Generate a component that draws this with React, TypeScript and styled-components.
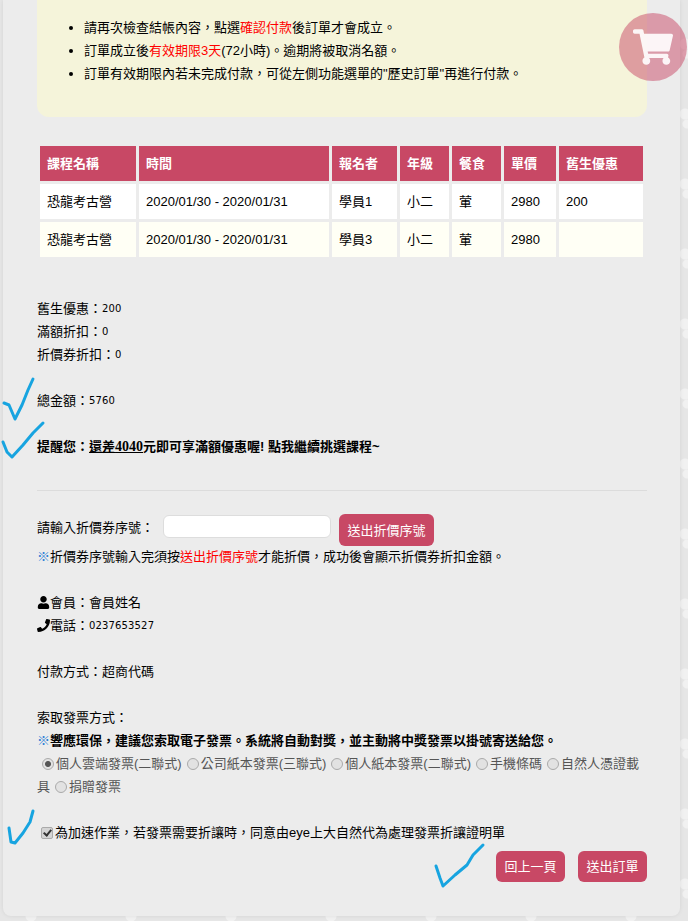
import React from 'react';
import styled, { createGlobalStyle } from 'styled-components';
import { FaShoppingCart, FaUser, FaPhone } from 'react-icons/fa';

const GlobalStyle = createGlobalStyle`
  html, body {
    margin: 0;
    padding: 0;
    height: 921px;
    overflow: hidden;
  }
  body {
    background-color: #e6e6e6;
    background-image:
      radial-gradient(circle at 31px 6px, #f1f1f1 0 5px, transparent 6px),
      radial-gradient(circle at 85px 44px, #f1f1f1 0 5px, transparent 6px),
      radial-gradient(circle at 87px 54px, #f1f1f1 0 4px, transparent 5px);
    background-size: 100px 70px;
    font-family: "Liberation Sans", "Noto Sans CJK TC", sans-serif;
    font-size: 13px;
    line-height: 23px;
    color: #000;
  }
`;

const Panel = styled.main`
  position: relative;
  box-sizing: border-box;
  width: 677px;
  height: 916px;
  margin-left: 3px;
  padding: 0 33px 34px 34px;
  background: #ececec;
  border-radius: 0 0 8px 8px;
  box-shadow: 0 0 4px rgba(0, 0, 0, 0.08);
`;

const Notice = styled.section`
  padding: 16px 0 32px;
  background: #f5f4da;
  border-radius: 0 0 12px 12px;
`;

const NoticeList = styled.ul`
  margin: 0;
  padding-left: 47px;
`;

const Red = styled.span`
  color: #f00;
`;

const OrderTable = styled.table`
  width: 609px;
  margin-top: 26px;
  table-layout: fixed;
  border-collapse: separate;
  border-spacing: 3px;
`;

const HeadCell = styled.th<{ $width: number }>`
  width: ${({ $width }) => $width}px;
  height: 35px;
  padding: 0 0 0 7px;
  box-sizing: border-box;
  background: #c84865;
  color: #fff;
  font-weight: 700;
  text-align: left;
`;

const Cell = styled.td<{ $alt?: boolean }>`
  height: 35px;
  padding: 0 0 0 7px;
  box-sizing: border-box;
  background: ${({ $alt }) => ($alt ? '#fffff5' : '#fff')};
`;

const Block = styled.div<{ $top?: number }>`
  margin-top: ${({ $top }) => $top ?? 0}px;
`;

const Line = styled.div`
  height: 23px;
  display: flex;
  align-items: center;
`;

const Num = styled.span`
  font-family: "DejaVu Sans", sans-serif;
  font-size: 10px;
  letter-spacing: 0.15px;
`;

const Reminder = styled.div`
  height: 23px;
  font-weight: 700;
`;

const Underlined = styled.span`
  text-decoration: underline;
`;

const SerifNum = styled.span`
  font-family: "Liberation Serif", serif;
  font-size: 14px;
`;

const Rule = styled.hr`
  margin: 32px 0 0;
  border: 0;
  border-top: 1px solid #dcdcdc;
  height: 1px;
`;

const CouponRow = styled.div`
  display: flex;
  align-items: flex-start;
  height: 31px;
  margin-top: 22px;
`;

const CouponLabel = styled.label`
  width: 126px;
  margin-top: 2px;
`;

const CouponInput = styled.input`
  box-sizing: border-box;
  width: 168px;
  height: 23px;
  margin-top: 1px;
  border: 1px solid #ddd;
  border-radius: 6px;
  background: #fff;
  outline: none;
`;

const ActionButton = styled.button<{ $height: number }>`
  height: ${({ $height }) => $height}px;
  padding: 0 8.5px;
  border: 0;
  border-radius: 6px;
  background: #c84865;
  color: #fff;
  font: inherit;
  white-space: nowrap;
`;

const CouponButton = styled(ActionButton)`
  margin-left: 8px;
`;

const Mark = styled.span`
  color: #2b7fd6;
`;

const IconSlot = styled.span`
  display: inline-flex;
  width: 13px;
  font-size: 13px;
  justify-content: center;
`;

const Bold = styled.div`
  font-weight: 700;
`;

const InvoiceChoices = styled.div`
  color: #555;
`;

const RadioInput = styled.input`
  appearance: none;
  box-sizing: border-box;
  width: 12px;
  height: 12px;
  margin: 0 2px 0 5px;
  vertical-align: -2px;
  border: 1px solid #aaa;
  border-radius: 50%;
  background: #e2e2e2;

  &:checked {
    background: radial-gradient(circle, #555 0 2.5px, #e2e2e2 3.5px);
  }
`;

const AgreeRow = styled.label`
  display: flex;
  align-items: center;
  height: 23px;
  margin-top: 23px;
`;

const CheckInput = styled.input`
  appearance: none;
  position: relative;
  box-sizing: border-box;
  width: 12px;
  height: 12px;
  margin: 0 2px 0 4px;
  border: 1px solid #aaa;
  border-radius: 2px;
  background: #d4d4d4;

  &:checked::after {
    content: '';
    position: absolute;
    left: 3px;
    top: 0;
    width: 3px;
    height: 6px;
    border: solid #333;
    border-width: 0 2px 2px 0;
    transform: rotate(40deg);
  }
`;

const ButtonRow = styled.div`
  display: flex;
  justify-content: flex-end;
  gap: 13px;
  margin-top: 7px;
`;

const FormButton = styled(ActionButton)`
  width: 69px;
  padding: 0;
`;

const CartBubble = styled.div`
  position: absolute;
  top: 13px;
  left: 616px;
  width: 68px;
  height: 68px;
  border-radius: 50%;
  background: rgba(200, 72, 101, 0.5);
  color: rgba(255, 255, 255, 0.9);
  display: flex;
  align-items: center;
  justify-content: center;
  font-size: 40px;
`;

const InkLayer = styled.svg`
  position: absolute;
  top: 0;
  left: -3px;
  width: 688px;
  height: 921px;
  pointer-events: none;
  fill: none;
  stroke: #17a4e0;
  stroke-width: 3;
  stroke-linecap: round;
  stroke-linejoin: round;
`;

const columns: [string, number][] = [
  ['課程名稱', 96],
  ['時間', 190],
  ['報名者', 65],
  ['年級', 49],
  ['餐食', 49],
  ['單價', 52],
  ['舊生優惠', 84],
];

const rows = [
  ['恐龍考古營', '2020/01/30 - 2020/01/31', '學員1', '小二', '葷', '2980', '200'],
  ['恐龍考古營', '2020/01/30 - 2020/01/31', '學員3', '小二', '葷', '2980', ''],
];

const invoices = ['個人雲端發票(二聯式)', '公司紙本發票(三聯式)', '個人紙本發票(二聯式)', '手機條碼', '自然人憑證載具', '捐贈發票'];

const checkmarks = [
  'M4 403 L9 405 L15 419 L22 405 L28 390 L33 379',
  'M3 442 L7 452 L12 457 L23 445 L33 433 L43 423',
  'M9 828 L11 842 L15 843 L23 833 L30 822 L33 811',
  'M436 866 L440 878 L443 886 L455 875 L467 865 L473 855 L483 845',
];

export default function App() {
  return (
    <>
      <GlobalStyle />
      <Panel>
        <Notice>
          <NoticeList>
            <li>請再次檢查結帳內容，點選<Red>確認付款</Red>後訂單才會成立。</li>
            <li>訂單成立後<Red>有效期限3天</Red>(72小時)。逾期將被取消名額。</li>
            <li>訂單有效期限內若未完成付款，可從左側功能選單的"歷史訂單"再進行付款。</li>
          </NoticeList>
        </Notice>

        <OrderTable>
          <thead>
            <tr>
              {columns.map(([name, width]) => (
                <HeadCell key={name} $width={width}>{name}</HeadCell>
              ))}
            </tr>
          </thead>
          <tbody>
            {rows.map((row, i) => (
              <tr key={i}>
                {row.map((value, j) => (
                  <Cell key={j} $alt={i === 1}>{value}</Cell>
                ))}
              </tr>
            ))}
          </tbody>
        </OrderTable>

        <Block $top={37}>
          <Line>舊生優惠：<Num>200</Num></Line>
          <Line>滿額折扣：<Num>0</Num></Line>
          <Line>折價券折扣：<Num>0</Num></Line>
        </Block>
        <Block $top={23}>
          <Line>總金額：<Num>5760</Num></Line>
        </Block>
        <Block $top={23}>
          <Reminder>
            提醒您：<Underlined>還差<SerifNum>4040</SerifNum></Underlined>元即可享滿額優惠喔! 點我繼續挑選課程~
          </Reminder>
        </Block>

        <Rule />

        <CouponRow>
          <CouponLabel>請輸入折價券序號：</CouponLabel>
          <CouponInput type="text" />
          <CouponButton $height={32}>送出折價序號</CouponButton>
        </CouponRow>
        <Line>
          <Mark>※</Mark>折價券序號輸入完須按<Red>送出折價序號</Red>才能折價，成功後會顯示折價券折扣金額。
        </Line>

        <Block $top={23}>
          <Line><IconSlot><FaUser /></IconSlot>會員：會員姓名</Line>
          <Line><IconSlot><FaPhone /></IconSlot>電話：<Num>0237653527</Num></Line>
        </Block>
        <Block $top={23}>
          <Line>付款方式：超商代碼</Line>
        </Block>
        <Block $top={23}>
          <Line>索取發票方式：</Line>
          <Bold><Mark>※</Mark>響應環保，建議您索取電子發票。系統將自動對獎，並主動將中獎發票以掛號寄送給您。</Bold>
          <InvoiceChoices>
            {invoices.map((name, i) => (
              <React.Fragment key={name}>
                <RadioInput type="radio" name="invoice" disabled defaultChecked={i === 0} />
                {name}
              </React.Fragment>
            ))}
          </InvoiceChoices>
        </Block>

        <AgreeRow>
          <CheckInput type="checkbox" disabled defaultChecked />
          為加速作業，若發票需要折讓時，同意由eye上大自然代為處理發票折讓證明單
        </AgreeRow>

        <ButtonRow>
          <FormButton $height={31}>回上一頁</FormButton>
          <FormButton $height={31}>送出訂單</FormButton>
        </ButtonRow>

        <CartBubble><FaShoppingCart /></CartBubble>

        <InkLayer viewBox="0 0 688 921">
          {checkmarks.map((d) => (
            <path key={d} d={d} />
          ))}
        </InkLayer>
      </Panel>
    </>
  );
}
